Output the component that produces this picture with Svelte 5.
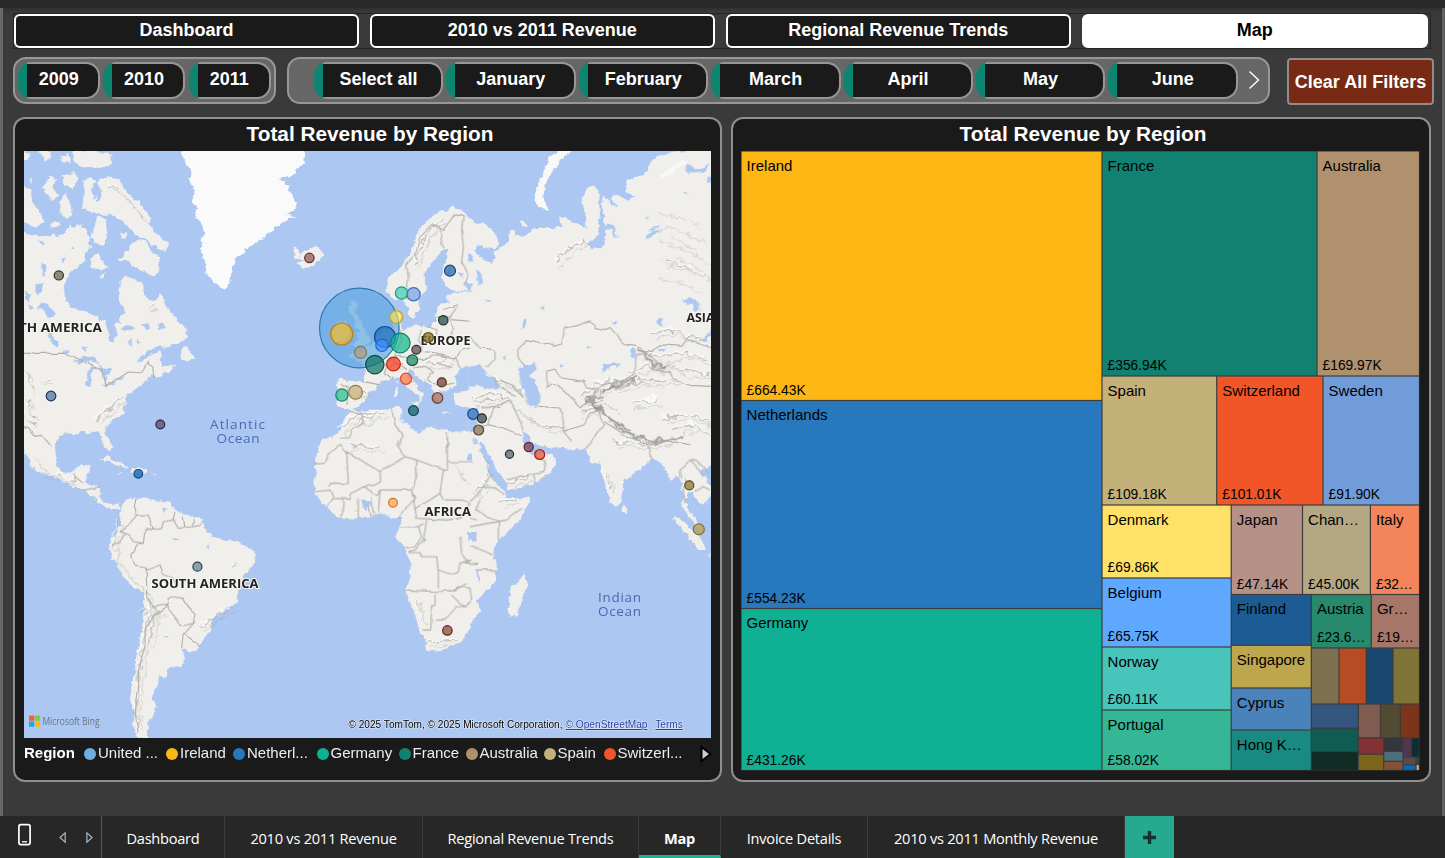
<script>
  const pages = ['Dashboard', '2010 vs 2011 Revenue', 'Regional Revenue Trends', 'Map'];
  const years = ['2009', '2010', '2011'];
  const months = ['Select all', 'January', 'February', 'March', 'April', 'May', 'June'];
  const legend = [
    ['United ...', '#70aee0', 82], ['Ireland', '#fdb714', 67], ['Netherl...', '#2878be', 83.5], ['Germany', '#10b095', 82],
    ['France', '#118272', 67], ['Australia', '#af916d', 78], ['Spain', '#c4b079', 60], ['Switzerl...', '#f15628', 82]
  ];
  const tabs = [
    ['Dashboard', 123], ['2010 vs 2011 Revenue', 198], ['Regional Revenue Trends', 216], ['Map', 82],
    ['Invoice Details', 147], ['2010 vs 2011 Monthly Revenue', 257]
  ];

  // x1, y1, x2, y2, fill, label, value
  const cells = [
    [741, 151, 1102, 400.5, '#fdb714', 'Ireland', '£664.43K'],
    [741, 400.5, 1102, 608.5, '#2878be', 'Netherlands', '£554.23K'],
    [741, 608.5, 1102, 770.5, '#10b095', 'Germany', '£431.26K'],
    [1102, 151, 1317, 376, '#118272', 'France', '£356.94K'],
    [1317, 151, 1419.5, 376, '#af916d', 'Australia', '£169.97K'],
    [1102, 376, 1216.7, 505, '#c4b079', 'Spain', '£109.18K'],
    [1216.7, 376, 1323, 505, '#f15628', 'Switzerland', '£101.01K'],
    [1323, 376, 1419.5, 505, '#709dda', 'Sweden', '£91.90K'],
    [1102, 505, 1231.2, 578, '#ffe168', 'Denmark', '£69.86K'],
    [1102, 578, 1231.2, 647, '#5ea9ff', 'Belgium', '£65.75K'],
    [1102, 647, 1231.2, 710, '#48c5bb', 'Norway', '£60.11K'],
    [1102, 710, 1231.2, 770.5, '#35b795', 'Portugal', '£58.02K'],
    [1231.2, 505, 1302.5, 594.5, '#b69187', 'Japan', '£47.14K'],
    [1302.5, 505, 1370.4, 594.5, '#b4a784', 'Chan…', '£45.00K'],
    [1370.4, 505, 1419.5, 594.5, '#f48459', 'Italy', '£32…'],
    [1231.2, 594.5, 1311.3, 645.3, '#1d5b95', 'Finland', ''],
    [1231.2, 645.3, 1311.3, 688, '#bda74e', 'Singapore', ''],
    [1231.2, 688, 1311.3, 730, '#4a82bb', 'Cyprus', ''],
    [1231.2, 730, 1311.3, 770.5, '#188a81', 'Hong K…', ''],
    [1311.3, 594.5, 1371.3, 648, '#278a6c', 'Austria', '£23.6…'],
    [1371.3, 594.5, 1419.5, 648, '#a67669', 'Gr…', '£19…'],
    [1311.3, 648, 1339, 704, '#7d7050'], [1339, 648, 1366.2, 704, '#b64b24'],
    [1366.2, 648, 1393, 704, '#17476f'], [1393, 648, 1419.5, 704, '#7f7337'],
    [1311.3, 704, 1358.3, 728.2, '#335580'], [1311.3, 728.2, 1358.3, 751.6, '#115c52'],
    [1311.3, 751.6, 1358.3, 770.5, '#102c25'], [1358.3, 704, 1380.4, 737.8, '#7f5b50'],
    [1380.4, 704, 1400.3, 737.8, '#524a32'], [1400.3, 704, 1419.5, 737.8, '#7d351a'],
    [1358.3, 737.8, 1383.7, 754.3, '#843135'], [1358.3, 754.3, 1383.7, 770.5, '#7d661b'],
    [1383.7, 737.8, 1403, 751.3, '#31373b'], [1383.7, 751.3, 1403, 761.3, '#4d6f79'],
    [1383.7, 761.3, 1403, 770.5, '#865038'], [1403, 737.8, 1411.2, 757.2, '#543550'],
    [1411.2, 737.8, 1419.5, 757.2, '#0f2d35'], [1403, 757.2, 1416, 765, '#5a4a4a'],
    [1416, 757.2, 1419.5, 764.5, '#3c4148'], [1403, 765, 1416, 770.5, '#066bbc'],
    [1416, 764.5, 1419.5, 770.5, '#e0a060']
  ];

  // x, y, radius, fill, outline, opacity
  const bubbles = [
    [359.3, 328, 39.8, '#56a4e0', '#2f76ab', 0.64],
    [341.7, 334, 11, '#fdb714', '#c57e0c', 0.62],
    [385, 337, 10.5, '#1766b8', '#0f4a8e', 0.68],
    [400.3, 343, 9.8, '#10b78e', '#0b8468', 0.7],
    [374.8, 364.6, 9.2, '#0b7361', '#084e45', 0.72],
    [355.6, 392.3, 6.9, '#c4ad72', '#92804b', 0.68],
    [393.5, 364, 6.9, '#f4371d', '#bd2b16', 0.72],
    [413.6, 294.3, 6.6, '#7c9fe2', '#3f6bbd', 0.72],
    [396.2, 317, 6.4, '#ffe250', '#c2a52a', 0.62],
    [382, 345.3, 6.2, '#3d90ff', '#2165d6', 0.7],
    [401.5, 293, 6.1, '#3dcfae', '#209879', 0.72],
    [341.9, 395, 6.1, '#30bf92', '#168660', 0.74],
    [360.5, 352.4, 6, '#ad9e87', '#81785f', 0.74],
    [406, 378.8, 5.6, '#ff754b', '#d44f27', 0.74],
    [450, 270.7, 5.5, '#2367ad', '#17437b', 0.74],
    [412.3, 360.2, 5.4, '#23906d', '#165a47', 0.76],
    [437.5, 398, 5.3, '#a56e60', '#734138', 0.76],
    [698.8, 529.3, 5.5, '#b3a25e', '#82722f', 0.8],
    [473, 414, 5.3, '#377abd', '#1c4b87', 0.76],
    [478.6, 430, 5, '#8a7c5c', '#4e4634', 0.82],
    [539.7, 454.5, 5, '#dd5a40', '#a51c18', 0.76],
    [441.8, 382.4, 4.5, '#844e42', '#4d2822', 0.8],
    [428.3, 337.5, 5, '#8a7729', '#584c19', 0.78],
    [443.3, 320.3, 4.7, '#355a51', '#18302c', 0.8],
    [416.3, 349.8, 4.4, '#6f5662', '#3b2934', 0.8],
    [413.5, 410.6, 4.9, '#156a70', '#11434b', 0.78],
    [481.9, 418.3, 4.5, '#4c5360', '#222429', 0.8],
    [528.7, 447, 4.6, '#81475c', '#55222f', 0.8],
    [509.5, 454.2, 4.1, '#6c7380', '#2a2d33', 0.85],
    [309.4, 257.9, 4.7, '#93655e', '#5b2f2b', 0.8],
    [58.8, 275.4, 4.6, '#7b7869', '#33312a', 0.85],
    [51, 396, 4.8, '#5d80aa', '#1d3657', 0.8],
    [160.3, 424.5, 4.4, '#654f76', '#2e223b', 0.8],
    [138.3, 473.8, 4.3, '#1f71bd', '#104480', 0.84],
    [197.4, 566.7, 4.5, '#71919a', '#274048', 0.82],
    [393, 502.8, 4.4, '#ffab58', '#d07420', 0.76],
    [447.4, 630.4, 4.7, '#96594c', '#56231d', 0.82],
    [689.3, 485.3, 4.5, '#958648', '#574c22', 0.84]
  ];

  // Map sheets: each has its own origin and is drawn at three units per pixel.
  const land = [
    [20, 148, [
      '0,250 30,262 60,258 85,268 100,258 110,268 140,250 150,228 160,240 178,228 200,238 198,262 215,270 205,290 212,300 190,318 200,340 180,350 165,365 145,380 138,400 133,430 135,460 150,475 175,487 205,492 225,508 255,520 262,545 270,575 280,583 290,560 285,530 298,520 302,505 318,495 308,470 295,450 300,430 298,400 315,383 340,392 370,408 372,440 385,455 405,460 418,435 430,455 440,475 450,490 475,520 500,545 505,565 485,580 460,590 430,598 400,600 380,612 360,630 350,645 365,640 390,622 415,612 425,622 420,640 430,655 465,650 458,668 430,678 408,692 398,678 385,690 365,712 345,725 325,740 318,755 310,780 315,795 290,810 270,825 255,840 258,860 268,882 262,882 255,882 248,868 235,850 205,855 180,850 160,858 140,855 120,865 105,882 0,882',
      '0,105 30,125 40,165 60,190 70,220 55,235 30,235 12,225 0,220', '0,5 25,15 28,35 10,42 0,35', '60,10 80,8 95,22 75,42', '120,25 145,18 150,40 130,48',
      '160,12 200,5 275,15 275,50 240,60 190,55 165,45', '65,120 90,85 110,95 100,120 115,145 95,160 80,140', '128,85 165,75 175,95 160,120 130,110', '120,160 140,135 155,185 150,210 125,205',
      '190,100 215,85 225,95 215,130 220,160 232,130 230,100 262,88 305,95 310,120 330,145 352,160 380,195 395,215 385,230 410,258 448,288 435,312 400,292 375,275 350,262 330,240 300,215 270,200 240,200 205,190 185,180 195,140',
      '235,205 258,215 262,265 250,290 225,285 215,265 225,235', '212,330 235,315 250,345 268,358 245,365 215,360', '330,300 345,275 375,280 395,310 412,320 418,350 405,388 375,375 345,355 320,340 295,335 310,320',
      '305,252 325,255 318,275 303,270', '480,635 485,605 500,600 515,615 525,630 505,638', '90,230 105,215 120,235 100,243', '238,380 255,375 245,388', '25,95 38,90 35,108'
    ]],
    [240, 148, [
      '160,298 175,306 180,325 205,303 235,295 250,320 230,345 205,362 180,355 170,345 190,335 165,325',
      '330,465 345,455 355,475 345,495 365,520 375,545 390,570 385,590 345,598 335,590 355,575 345,560 360,548 345,535 340,510 325,490',
      '285,525 320,520 330,545 320,575 280,580 275,550',
      '440,410 445,385 475,365 500,335 515,300 530,255 560,220 600,190 640,180 675,190 690,215 700,220 700,426 650,428 620,420 608,395 605,365 620,345 625,325 620,305 600,310 585,340 560,360 550,385 560,410 555,430 540,450 535,490 520,512 505,505 500,475 490,455 475,455 455,450 440,430',
      '700,435 660,432 620,440 618,455 628,468 608,462 592,478 590,505 585,520 570,535 540,530 515,535 490,545 480,530 484,500 470,485 456,500 458,540 440,545 415,560 400,585 375,600 368,608 345,618 325,622 335,632 370,645 378,665 370,702 340,700 297,692 288,710 300,735 290,772 310,785 325,790 350,780 375,760 385,735 410,718 420,700 450,695 465,688 480,690 495,710 515,730 537,742 540,765 552,745 555,740 540,728 525,705 503,685 505,665 520,668 530,685 555,700 575,715 585,740 595,768 608,762 600,730 620,722 645,716 650,700 645,685 665,660 700,652',
      '640,738 680,725 720,725 720,778 695,775 670,782 645,768', '510,762 538,760 532,778', '464,720 474,715 474,745 464,748', '464,695 471,700 469,712', '605,790 635,795 610,798',
      '236,882 270,868 300,850 318,805 335,785 365,795 400,785 450,780 480,775 487,795 478,815 510,835 535,862 560,838 585,840 630,850 670,850 720,850 720,882'
    ]],
    [470, 148, [
      '-5,218 40,225 75,255 88,285 70,303 45,300 20,292 15,310 40,335 62,345 75,330 75,310 105,290 120,270 115,245 130,245 135,265 165,262 200,240 250,240 275,235 265,205 300,215 330,230 350,245 345,200 335,150 355,120 370,112 385,125 390,200 385,250 370,280 345,288 365,300 390,300 405,280 405,235 395,170 405,140 418,168 445,175 420,150 440,140 470,155 490,150 465,130 470,95 520,85 535,55 560,25 600,12 735,0 740,882 -5,882',
      '150,225 160,220 170,230 158,236'
    ]],
    [20, 440, [
      '0,-3 107,-3 105,20 108,50 112,80 130,97 160,98 172,80 185,72 208,75 205,95 195,115 195,130 225,135 243,145 238,175 250,185 275,195 298,190 303,208 285,200 270,207 245,195 225,175 205,160 180,150 150,135 110,115 60,98 35,85 25,55 0,10',
      '245,-3 268,-3 275,20 270,32 258,22', '236,58 260,50 290,62 320,75 325,83 300,80 270,66', '335,85 360,82 385,95 375,102 350,100 335,103', '290,101 308,100 300,106', '396,101 412,102 402,106',
      '300,210 315,185 345,168 350,180 370,172 400,180 440,185 465,205 490,225 520,232 545,232 555,265 575,290 600,295 650,305 690,325 708,345 700,375 670,405 660,440 650,490 620,505 580,535 570,570 550,600 535,625 515,635 485,628 495,655 485,680 445,685 440,710 415,712 415,740 400,755 395,780 410,800 400,825 380,850 382,900 350,890 335,850 345,820 330,780 335,740 345,690 350,640 365,580 370,520 375,460 340,440 310,410 290,375 270,340 265,320 275,290 285,285 300,250'
    ]],
    [240, 440, [
      '245,-3 270,-5 720,-5 700,560 697,530 692,550 685,575 655,610 620,625 580,635 562,628 555,600 535,560 525,520 498,455 500,430 515,390 505,345 490,320 470,290 478,260 490,232 475,230 455,238 430,220 410,222 390,232 350,235 315,238 290,230 250,190 225,155 220,130 230,100 225,60'
    ]],
    [470, 440, [
      '-5,-5 10,-5 40,50 60,100 80,130 105,155 105,175 150,175 180,168 175,195 150,240 110,280 80,305 70,340 80,385 75,430 40,460 20,480 30,515 10,535 0,565 -5,565',
      '30,-5 60,50 85,95 105,120 112,150 150,145 200,125 240,95 262,65 255,50 225,35 210,30 200,50 185,45 165,20 155,-5',
      '175,-5 200,12 230,25 260,22 300,30 345,28 355,45 365,70 385,75 390,60 395,100 410,150 425,190 440,200 450,190 458,150 460,120 480,110 500,95 530,70 550,55 575,70 590,90 600,120 625,105 635,130 640,170 634,200 655,225 665,245 685,265 690,270 680,235 665,220 655,200 645,180 655,155 670,160 690,190 705,190 720,170 725,150 710,120 690,95 710,85 735,60 740,-5',
      '460,193 472,205 470,220 458,215', '605,230 630,235 665,270 700,300 707,330 690,332 655,290 630,260', '708,342 740,350 740,358', '163,400 173,425 160,470 140,525 120,532 112,505 122,480 118,440 145,430'
    ]]
  ];

  const ice = 'M483,0 L490,30 515,75 510,100 528,130 515,160 535,180 525,205 545,225 553,260 540,300 555,340 560,380 580,400 615,425 630,405 635,365 650,330 690,295 735,265 770,235 825,205 800,200 830,180 825,150 800,130 810,110 780,95 820,80 830,60 855,45 850,0Z';

  const water = [
    [20, 148, 'M160,640L185,628 215,626 238,645 205,640 180,647Z M200,665L225,655 213,680 212,712 201,714 202,680Z M235,652L252,665 275,658 270,678 256,685 260,702 250,695 245,675Z M245,716L280,698 286,704 258,717Z M283,692L315,684 310,691 290,697Z M75,520L85,545 105,575 120,598 108,596 88,570 77,545Z M60,460L75,470 95,480 105,495 85,510 75,490 55,480Z M65,345L80,350 75,390 65,385Z M115,335L140,332 130,342Z M15,430L35,440 25,460 15,450Z M45,410L70,405 65,430 50,440Z M25,470L45,478 30,485Z M300,540L325,535 345,542 318,550Z M365,530L385,525 390,545 372,545Z M410,530L430,525 440,540 415,542Z M325,580L335,570 335,598Z M355,565L362,580 352,590Z M185,600L200,598 198,612Z M125,605L150,608 145,618 130,614Z M230,110L245,125 240,160 228,165Z M55,280L75,285 65,292Z M150,300L165,295 160,306Z'],
    [240, 148, 'M675,400L692,410 688,425 672,415Z M660,370L668,375 665,395Z M628,350L634,370 626,378Z'],
    [470, 148, 'M-5,655L20,648 45,662 50,680 85,700 92,720 60,723 30,715 -5,716Z M145,660L165,655 195,646 200,665 180,680 200,705 210,740 205,775 185,778 165,755 165,730 150,700Z M-5,778L10,782 25,778 20,800 22,830 10,850 -5,853Z M12,866L28,890 10,890Z M158,850L175,860 188,885 158,885Z M20,360L35,380 40,410 28,415 18,385Z M-5,310L10,330 5,345 -5,340Z M-5,405L5,410 5,430 -5,430Z M45,455L65,460 60,470Z M160,515L172,512 168,530 155,545Z M210,485L225,468 222,490Z M530,200L536,215 530,212Z M528,268L545,240 575,232 550,248 580,247 545,260 535,275Z M400,650L450,646 448,655 415,658 400,675Z M645,45L660,55 690,65 725,45 700,75 665,72 650,75Z M712,90L725,85 725,108 715,105Z M640,455L665,450 685,465 690,490 675,490 670,470 650,470Z M690,578L710,560 730,535 725,560 705,578Z M563,515L580,510 575,535 565,530Z M405,230L430,230 440,240 438,262 450,268 432,265 428,242 405,242Z M265,650L285,650 275,658Z M348,590L360,598 350,603Z M425,525L445,522 440,532Z M565,605L590,598 585,612 570,612Z M95,630L108,622 103,638Z M640,135L652,135 648,143Z M482,600L500,605 495,632 482,625Z'],
    [20, 440, 'M430,205L445,210 435,222Z M455,292L475,298 465,302Z M562,312L572,322 565,330Z M632,380L650,368 645,380Z M430,585L450,592 440,596Z'],
    [240, 440, 'M360,180L375,178 390,185 388,200 375,206 366,196Z M685,280L710,278 708,305 690,302Z M545,295L566,296 555,306Z M680,50L690,40 695,60 682,64Z'],
    [470, 440, 'M-5,278L18,280 16,305 -5,303Z M18,380L25,395 30,430 22,420Z']
  ];

  const borders = [
    [20, 148, 'M0,616H130L165,627 210,650 245,665 255,715 290,695 325,672 370,675 385,640 398,655 402,690 M0,835L25,838 45,865 65,862 95,895'],
    [240, 148, 'M500,455L505,390 500,350 530,310 540,265 575,230 600,240 605,285 612,305 M575,230L610,245 640,205 670,200 665,245 670,300 665,340 685,380 675,405 M480,545L485,580 470,605 440,585 M610,485L650,470 M590,508L630,510 650,475 M635,515L690,520 M630,510L640,540 635,570 685,565 M545,545L535,575 550,610 590,615 630,625 M440,640L475,625 510,630 550,635 590,620 650,635 660,660 M520,660L555,655 580,670 560,695 M590,645L640,660 M560,695L600,715 640,705 M370,700L415,710 M302,712L325,715 320,770 M440,645L430,675 455,690 M470,610L460,640 500,665 M325,790L365,795 370,825 335,845 325,870 M455,785L465,830 485,860 480,895 M622,850V900 M300,870H330 M640,640L660,610 690,600 M560,535L590,545 590,580'],
    [470, 148, 'M0,565L30,600 75,605 75,630 50,660 M165,655L145,630 143,605 170,578 215,588 245,585 250,592 275,585 285,540 325,532 360,518 375,530 375,542 405,548 420,538 455,580 465,590 500,595 525,608 550,610 570,590 635,595 650,575 680,585 725,600 M230,715V670L255,663 275,690 340,700 350,720 385,725 360,760 330,780 310,755 275,720 240,705 230,720 M205,775L270,780 280,820 280,850 305,880 M280,850L340,830 360,795 400,785 M370,770L375,725 400,710 455,700 490,680 500,620 525,610 M525,612L560,640 545,665 600,670 610,695 660,712 725,715 M120,755L75,775 50,830 25,840 M120,755L150,820 160,850 M50,830L100,840 160,865 M90,695L130,715 160,745 M95,720L140,745 M385,790L400,830 365,880 M400,820L480,870 545,890 600,880 660,890 M35,780L90,778'],
    [20, 440, 'M165,100V125L155,128 M190,130L165,110 M195,150L240,140 M215,165L232,178 M345,175L340,200 350,225 385,225 400,270 375,265 370,310 350,315 335,350 345,375 375,380 385,390 420,375 430,400 455,410 470,435 M445,475L440,500 480,550 490,557 520,550 525,520 505,500 490,475 455,470 445,475 M355,220L325,255 300,275 M300,275L330,290 340,305 370,310 M275,315L300,305 315,280 M378,265L405,270 425,265 430,245 460,240 465,215 M460,240L475,265 520,260 545,255 M490,230L495,265 M520,235L518,262 M378,380L380,440 380,470 400,500 440,495 430,510 400,530 375,570 375,620 355,690 355,750 345,820 355,880 M485,625L490,580 525,605 535,620 M525,545L490,585'],
    [240, 440, 'M225,72L255,70 265,45 290,20 300,15 M300,12L320,35 M325,130L270,130 265,140 M325,130L320,35 420,95 495,50 475,20V0 M495,50L530,60 610,90H622V-5 M622,65H700 M530,60L530,110 515,150 420,150 410,165 370,140 335,160 330,178 280,175 270,150 225,155 M420,95L422,125 405,135 370,140 M610,90L600,160 570,180 525,205 515,150 M420,150L415,220 M395,170L400,222 M355,175V235 M385,200L390,230 M310,180L305,235 M280,175L260,200 M515,155L525,175 490,215 475,235 M525,205L530,235 620,240 660,235 690,190 M480,260H535L550,250 M535,260L545,290 525,320 490,325 M560,240L550,300 525,330 505,335 M505,338H540L545,350 590,350 595,395 595,445 M500,450L600,455 645,450 M585,458V495L575,500 572,570 M572,570L550,570 M585,540L615,540 650,500 680,500 M610,180L600,160 M615,180L660,180 690,190 M595,390L640,405 655,395 660,370 695,360 M630,455L655,440 690,445 695,480 680,500 660,490 635,465 M645,450L680,430 M660,290L665,340 690,370 715,370'],
    [470, 440, 'M110,120L190,100 220,95 225,60 195,50 M190,100L195,120 M0,185L20,160 40,145 75,140 100,165 M30,180L20,210 60,235 90,245 M0,260L80,245 110,240 155,205 M85,245L85,300 M0,315L70,345 M15,390H80 M345,28L370,0 M530,10L540,30 545,60 M635,115L630,90 660,60 680,80 700,110 M645,115L640,150 645,190 M675,155L700,140 720,150 M660,60L685,65 715,100 M20,240L0,235 M40,145L60,105']
  ];

  const ridges = [
    [20, 148, 'M12,660L25,680 20,700 35,720 M12,740L28,760 25,790 40,810 M240,800L280,770 305,750 M225,815L255,790 M15,800L45,830 M385,480L400,470 M60,700L90,690 M270,110L300,125 330,165 370,210'],
    [470, 148, 'M255,345L275,320 305,295 345,280 M585,340L660,360 725,395 M540,560L600,545 640,560 700,570 M530,620L580,625 640,615 715,635 M470,670L540,655 600,645 M380,740L440,700 500,690 560,700 620,695 M350,770L400,760 440,790 M60,690L110,705 160,735 M0,745L60,740 120,750 M10,765L80,755 M130,770L170,810 230,840 280,835 M150,780L200,825 M340,740L380,710 420,700 M560,660L620,650 M580,810L650,800 720,820 M600,850L680,830 720,860 M330,800L390,770 M480,770L560,755 M560,640L640,670 720,680 M430,720L520,700'],
    [20, 440, 'M295,240L280,320 305,380 340,420 375,450 M40,50L65,90 110,105 170,125 M385,460L395,520 370,600 360,690 350,780 355,860 M370,520L405,500 400,560 385,610 M400,530L430,510 M540,560L600,520 640,500'],
    [240, 440, 'M560,610L600,605 650,600 M530,480L545,540 M330,15L420,25 M640,70L680,120'],
    [470, 440, 'M40,60L60,110 M110,130L180,110 M430,5L540,10 600,5 M405,90L420,150 M10,160L55,130 M90,185L140,180'],
    [240, 148, 'M300,845L340,800 430,795 M345,830L400,800 M450,655L490,645 M395,735L330,740 M520,350L560,260 600,210 M560,650L620,640']
  ];

  const highRanges = 'M355,745L385,775 410,808 450,845 500,868 545,880 600,873 635,862 M380,770L400,800 440,825 480,850 M400,725L450,705 500,695 M345,760L400,745 M500,605L540,640 590,662';
  const faintRanges = 'M560,200L640,210 700,240 M580,235L650,260 710,290 M570,280L650,310 720,350 M560,390L650,410 700,440 M600,260L680,310 M620,330L710,370 M560,340L600,360';
</script>

<div class="app">
  <div class="topbar"></div>
  <main>
    <nav>
      {#each pages as p}
        <button class:active={p === 'Map'}>{p}</button>
      {/each}
    </nav>

    <div class="filters">
      <div class="slicer years">
        {#each years as y}<div class="pill"><span>{y}</span></div>{/each}
      </div>
      <div class="slicer months">
        {#each months as m}<div class="pill"><span>{m}</span></div>{/each}
        <svg class="chev" width="12" height="20" viewBox="0 0 12 20"><path d="M1.5 1.5 10.5 10 1.5 18.5" fill="none" stroke="#fff" stroke-width="1.4" /></svg>
      </div>
      <button class="clear">Clear All Filters</button>
    </div>

    <div class="panels">
      <section class="left">
        <h2>Total Revenue by Region</h2>
        <svg class="map" width="687" height="587" viewBox="24 151 687 587">
          <defs>
            <filter id="coast" filterUnits="userSpaceOnUse" x="10" y="140" width="720" height="610">
              <feTurbulence type="fractalNoise" baseFrequency="0.16" numOctaves="3" seed="7" result="n" />
              <feDisplacementMap in="SourceGraphic" in2="n" scale="6" xChannelSelector="R" yChannelSelector="G" result="d" />
              <feGaussianBlur in="d" stdDeviation="0.4" />
            </filter>
            <filter id="line" filterUnits="userSpaceOnUse" x="10" y="140" width="720" height="610">
              <feTurbulence type="fractalNoise" baseFrequency="0.1" numOctaves="1" seed="7" result="n" />
              <feDisplacementMap in="SourceGraphic" in2="n" scale="4" xChannelSelector="R" yChannelSelector="G" result="d" />
              <feGaussianBlur in="d" stdDeviation="0.3" />
            </filter>
            <filter id="relief" filterUnits="userSpaceOnUse" x="10" y="140" width="720" height="610">
              <feTurbulence type="fractalNoise" baseFrequency="0.12" numOctaves="2" seed="3" result="n" />
              <feDisplacementMap in="SourceGraphic" in2="n" scale="11" xChannelSelector="R" yChannelSelector="G" result="d" />
              <feGaussianBlur in="d" stdDeviation="0.6" />
            </filter>
          </defs>
          <rect x="24" y="151" width="687" height="587" fill="#abc7f2" />
          <g filter="url(#coast)">
            {#each land as [x, y, shapes]}
              <g transform="translate({x} {y}) scale(.33333)" fill="#f0efeb">
                {#each shapes as s}<polygon points={s} />{/each}
              </g>
            {/each}
            <path transform="translate(20 148) scale(.33333)" d={ice} fill="#fafafa" />
            <path transform="translate(470 148) scale(.33333)" fill="#f8f8f7" d="M250,15L310,5 280,30 245,75 225,110 220,150 240,185 210,180 190,155 205,110 225,60 240,25Z M565,85L640,35 655,40 580,92Z" />
            {#each water as [x, y, d]}
              <path transform="translate({x} {y}) scale(.33333)" {d} fill="#abc7f2" />
            {/each}
          </g>
          <g filter="url(#relief)" fill="none" stroke-linejoin="round">
            {#each ridges as [x, y, d]}
              <g transform="translate({x} {y}) scale(.33333)">
                <path {d} stroke="#85837e" stroke-width="4" opacity=".42" />
                <path {d} stroke="#fff" stroke-width="4" opacity=".7" transform="translate(-4 -5)" />
                <path {d} stroke="#a5a39d" stroke-width="4" opacity=".3" transform="translate(12 14)" />
              </g>
            {/each}
            <g transform="translate(470 148) scale(.33333)">
              <path d={faintRanges} stroke="#c2c0bb" stroke-width="4" opacity=".4" />
              <path d={highRanges} stroke="#9d9b95" stroke-width="14" opacity=".36" />
              <path d={highRanges} stroke="#716f6a" stroke-width="5" opacity=".5" />
            </g>
          </g>
          <g filter="url(#line)">
            {#each borders as [x, y, d]}
              <path transform="translate({x} {y}) scale(.33333)" {d} fill="none" stroke="#b3afa9" stroke-width="3.4" stroke-linejoin="round" />
            {/each}
          </g>
          <g class="land-label">
            <text x="10" y="331.5" textLength="92" lengthAdjust="spacingAndGlyphs">RTH AMERICA</text>
            <text x="420.5" y="345" textLength="50" lengthAdjust="spacingAndGlyphs">EUROPE</text>
            <text x="686.5" y="322" textLength="28" lengthAdjust="spacingAndGlyphs">ASIA</text>
            <text x="424.5" y="515.5" textLength="46.5" lengthAdjust="spacingAndGlyphs">AFRICA</text>
            <text x="151.5" y="587.5" textLength="107" lengthAdjust="spacingAndGlyphs">SOUTH AMERICA</text>
          </g>
          <g class="sea-label">
            <text x="210" y="428.5" textLength="55">Atlantic</text><text x="216.5" y="443" textLength="43">Ocean</text>
            <text x="598" y="601.5" textLength="43">Indian</text><text x="598" y="616" textLength="43">Ocean</text>
          </g>
          {#each bubbles as [x, y, r, f, s, o]}
            <circle cx={x} cy={y} {r} fill={f} fill-opacity={o} stroke={s} stroke-width="1.2" />
          {/each}
          <g>
            <path fill="#f1622b" d="M29 715.6h5.2v5.2H29z" /><path fill="#8bc53f" d="M34.9 715.6h5.2v5.2h-5.2z" />
            <path fill="#1ba8ef" d="M29 721.5h5.2v5.2H29z" /><path fill="#fdbb12" d="M34.9 721.5h5.2v5.2h-5.2z" />
            <text class="bing" x="42.5" y="724.8" textLength="57" lengthAdjust="spacingAndGlyphs">Microsoft Bing</text>
          </g>
          <g class="credit">
            <text x="348.5" y="728" textLength="214" lengthAdjust="spacingAndGlyphs">© 2025 TomTom, © 2025 Microsoft Corporation,</text>
            <text class="link" x="565.5" y="728" textLength="82" lengthAdjust="spacingAndGlyphs">© OpenStreetMap</text>
            <text class="link" x="655.3" y="728" textLength="27.5" lengthAdjust="spacingAndGlyphs">Terms</text>
          </g>
        </svg>
        <div class="legend">
          <b>Region</b>
          {#each legend as [name, color, width]}
            <span style:width="{width}px"><i style:background={color}></i>{name}</span>
          {/each}
          <svg width="12" height="20" viewBox="0 0 12 20"><path d="M1.5 3 10.5 10 1.5 17Z" fill="#ccc" stroke="#000" stroke-width="2" /></svg>
        </div>
      </section>

      <section class="right">
        <h2>Total Revenue by Region</h2>
        <svg class="tree" width="679" height="620" viewBox="741 151 679 620">
          <rect x="741" y="151" width="678.5" height="619.5" fill="#3c3c3a" />
          {#each cells as [x1, y1, x2, y2, fill, label, value]}
            <rect x={x1 + 0.6} y={y1 + 0.6} width={x2 - x1 - 1.2} height={y2 - y1 - 1.2} {fill} />
            {#if label}<text x={x1 + 5.6} y={Math.floor(y1 + 20.4)} class="name">{label}</text>{/if}
            {#if value}<text x={x1 + 5.6} y={Math.floor(y2 - 5.4)} class="val">{value}</text>{/if}
          {/each}
        </svg>
      </section>
    </div>
  </main>

  <footer>
    <div class="tools">
      <svg width="101" height="42" viewBox="0 816 101 42" fill="none">
        <rect x="18.9" y="824.6" width="11.2" height="20" rx="2" stroke="#fff" stroke-width="1.7" />
        <path d="M22 841.8h5" stroke="#fff" stroke-width="1.3" />
        <path d="M65.2 832.8v9.4L60 837.5Z" stroke="#9fb8c8" stroke-width="1.2" />
        <path d="M86.9 832.8v9.4l5.2-4.7Z" stroke="#9fb8c8" stroke-width="1.2" />
      </svg>
    </div>
    {#each tabs as [t, w]}
      <div class="tab" class:on={t === 'Map'} style:width="{w}px"><span>{t}</span></div>
    {/each}
    <div class="add"><svg width="13" height="13" viewBox="0 0 13 13"><path d="M6.5 0v13M0 6.5h13" stroke="#17302b" stroke-width="3.4" /></svg></div>
  </footer>
</div>

<style>
  :global(body) { margin: 0; background: #3a3a3a; }
  .app { width: 1445px; height: 858px; display: flex; flex-direction: column; overflow: hidden; background: #3a3a3a; font-family: 'Liberation Sans', Arial, sans-serif; box-sizing: border-box; }
  .app * { box-sizing: border-box; }
  .topbar { height: 8px; background: #282828; flex: none; }
  main { height: 808px; flex: none; padding: 5px 10px 0; border-left: 3px solid #686868; border-right: 3px solid #606060; box-shadow: inset 0 4px 5px -4px #242424; }
  nav { width: 1418px; height: 36px; display: grid; grid-template-columns: 345px 345.5px 345.5px 346.5px; column-gap: 10.5px; padding: 0; border: 1px solid #242424; }
  button { font: bold 18px 'Liberation Sans', Arial, sans-serif; color: #fff; padding: 0; }
  nav button { height: 34px; background: #1a1a1a; border: 2px solid #fff; border-radius: 6px; padding-bottom: 2px; }
  nav button.active { background: #fff; color: #000; }
  .filters { display: flex; margin-top: 8px; height: 47px; }
  .slicer { height: 47px; display: flex; border: 2px solid #979797; border-radius: 13px; background: #666; padding-top: 3px; flex: none; }
  .years { width: 263px; padding-left: 3px; gap: 3.3px; }
  .months { width: 983px; margin-left: 11px; padding-left: 25px; gap: 3px; }
  .pill { width: 82px; height: 37px; border-radius: 14px; padding: 2px 2px 2px 9px; background: linear-gradient(90deg, #0d8570 9px, #979797 9px); flex: none; }
  .months .pill { width: 129.4px; }
  .pill span { display: block; height: 33px; line-height: 31px; padding-right: 7.5px; text-align: center; font-size: 18px; font-weight: bold; color: #fff; background: #1a1a1a; border-radius: 0 12px 12px 0; }
  .chev { margin: 8px 0 0 7px; flex: none; }
  .clear { width: 147px; height: 47px; margin: 1px 0 0 17px; padding-top: 1px; background: #782a15; border: 2px solid #918b89; border-radius: 4px; flex: none; white-space: nowrap; }
  .panels { display: flex; gap: 9px; margin-top: 13px; }
  section { height: 665px; border: 2px solid #8f8f8f; border-radius: 12px; background: #1a1a1a; }
  .left { width: 709px; padding: 0 9px; }
  .right { width: 700px; padding: 0 8px; }
  h2 { margin: 0; height: 32px; line-height: 29px; text-align: center; font-size: 20.8px; color: #fff; }
  .left h2 { margin-left: 5px; }
  .right h2 { margin-left: 4px; }
  .map, .tree { display: block; }
  .legend { display: flex; align-items: center; height: 29px; font-size: 15px; color: #eee; white-space: nowrap; }
  .legend b { width: 60px; flex: none; color: #fff; }
  .legend span { display: flex; align-items: center; flex: none; }
  .legend i { width: 12px; height: 12px; border-radius: 50%; margin: 3px 2px 0 0; flex: none; }
  .legend svg { margin: 3px 0 0 14px; flex: none; }
  .land-label text { font: bold 13px 'Open Sans', 'Noto Sans', sans-serif; fill: #222; stroke: #f7f6f3; stroke-width: 2px; paint-order: stroke; }
  .sea-label text { font: 13.5px 'Open Sans', 'Noto Sans', sans-serif; fill: #4b6bb0; }
  .bing { font: 10px 'Open Sans', sans-serif; fill: #6d7480; }
  .credit text { font: 10.5px 'Liberation Sans', Arial, sans-serif; fill: #000; stroke: #dfe9f8; stroke-width: 1.2px; paint-order: stroke; }
  .credit .link { fill: #2941a0; text-decoration: underline; }
  .name { font-size: 15px; fill: #000; }
  .val { font-size: 13.8px; fill: #000; }
  footer { height: 42px; flex: none; display: flex; background: #272727; }
  .tools { width: 102px; border-right: 1px solid #575757; }
  .tab { height: 42px; border-right: 1px solid #3c3c3c; display: flex; align-items: center; justify-content: center; color: #fff; font: 14.6px 'Open Sans', 'Noto Sans', sans-serif; letter-spacing: -0.25px; white-space: nowrap; padding-top: 1px; }
  .tab.on { font-weight: bold; border-bottom: 3px solid #2aaa91; padding-top: 4px; }
  .add { width: 49px; background: #27a890; display: flex; align-items: center; justify-content: center; }
</style>
